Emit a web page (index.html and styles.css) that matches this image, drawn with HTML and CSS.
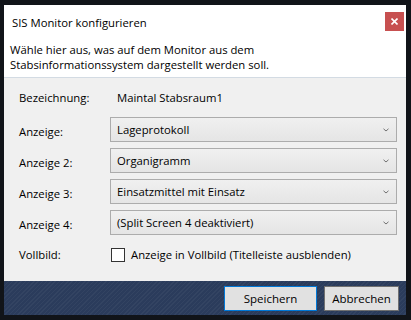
FILE: index.html
```html
<!DOCTYPE html>
<html lang="de">
<head>
<meta charset="utf-8">
<title>SIS Monitor konfigurieren</title>
<link rel="stylesheet" href="styles.css">
</head>
<body>
<div class="window">
  <div class="head">
    <div class="titlebar">
      <span class="title">SIS Monitor konfigurieren</span>
      <button class="close" aria-label="Schließen">
        <svg width="7" height="7" viewBox="0 0 7 7"><path d="M0.5 0.5 L6.5 6.5 M6.5 0.5 L0.5 6.5" stroke="#fff" stroke-width="1.6"/></svg>
      </button>
    </div>
    <p class="desc">Wähle hier aus, was auf dem Monitor aus dem<br>Stabsinformationssystem dargestellt werden soll.</p>
  </div>
  <div class="content">
    <div class="row row-name">
      <span class="label">Bezeichnung:</span>
      <span class="value">Maintal Stabsraum1</span>
    </div>
    <div class="row">
      <span class="label">Anzeige:</span>
      <div class="combo"><span>Lageprotokoll</span><svg class="chev" width="6" height="4" viewBox="0 0 6 4"><path d="M0.5 0.8 L3 3 L5.5 0.8" fill="none" stroke="#707070" stroke-width="1"/></svg></div>
    </div>
    <div class="row">
      <span class="label">Anzeige 2:</span>
      <div class="combo"><span>Organigramm</span><svg class="chev" width="6" height="4" viewBox="0 0 6 4"><path d="M0.5 0.8 L3 3 L5.5 0.8" fill="none" stroke="#707070" stroke-width="1"/></svg></div>
    </div>
    <div class="row">
      <span class="label">Anzeige 3:</span>
      <div class="combo"><span>Einsatzmittel mit Einsatz</span><svg class="chev" width="6" height="4" viewBox="0 0 6 4"><path d="M0.5 0.8 L3 3 L5.5 0.8" fill="none" stroke="#707070" stroke-width="1"/></svg></div>
    </div>
    <div class="row">
      <span class="label">Anzeige 4:</span>
      <div class="combo"><span>(Split Screen 4 deaktiviert)</span><svg class="chev" width="6" height="4" viewBox="0 0 6 4"><path d="M0.5 0.8 L3 3 L5.5 0.8" fill="none" stroke="#707070" stroke-width="1"/></svg></div>
    </div>
    <div class="row row-check">
      <span class="label">Vollbild:</span>
      <label class="check"><span class="box"></span><span>Anzeige in Vollbild (Titelleiste ausblenden)</span></label>
    </div>
  </div>
  <div class="footer">
    <button class="btn primary">Speichern</button>
    <button class="btn">Abbrechen</button>
  </div>
</div>
</body>
</html>
```
FILE: styles.css
```css
html, body {
  margin: 0;
  padding: 0;
  background: #111419;
}
body {
  padding: 5px 5px 5px 4px;
  font-family: "Open Sans", "Noto Sans", sans-serif;
  font-size: 11.3px;
  color: #000;
}
.window {
  width: 402px;
  height: 310px;
  display: flex;
  flex-direction: column;
  background: #f0f0f0;
}
.head {
  background: #fff;
  height: 72px;
  border-bottom: 1px solid #d3dbe3;
  box-sizing: content-box;
}
.titlebar {
  display: flex;
  align-items: flex-start;
  justify-content: space-between;
  padding: 7px 2px 0 8px;
  height: 25px;
}
.title {
  font-size: 11.3px;
  line-height: 16px;
  padding-top: 3px;
}
.close {
  width: 19px;
  height: 19px;
  border: 0;
  padding: 0;
  background: #c75050;
  display: flex;
  align-items: center;
  justify-content: center;
}
.desc {
  margin: 5px 0 0 6px;
  line-height: 15px;
}
.content {
  flex: 1;
  padding: 9px 9px 0 15px;
  display: flex;
  flex-direction: column;
  gap: 6px;
}
.row {
  display: flex;
  align-items: center;
  height: 25px;
}
.label {
  width: 91px;
  flex: none;
  padding-top: 4px;
}
.row-name .label { padding-top: 0; }
.row-name { height: 20px; margin-bottom: 4px; }
.value { padding-left: 7px; }
.combo {
  flex: 1;
  height: 25px;
  box-sizing: border-box;
  border: 1px solid #acacac;
  background: linear-gradient(#f0f0f0, #e5e5e5);
  display: flex;
  align-items: center;
  justify-content: space-between;
  padding: 0 7px 0 6px;
}
.chev { margin-top: 1px; }
.row-check { margin-top: 1px; }
.row-check .label { padding-top: 0; }
.check {
  display: flex;
  align-items: center;
  gap: 6px;
  padding-left: 1px;
}
.box {
  width: 14px;
  height: 14px;
  box-sizing: border-box;
  border: 1px solid #333;
  background: #fff;
}
.footer {
  height: 34px;
  background-color: #2b3c5c;
  background-image: repeating-linear-gradient(135deg, rgba(255,255,255,0.04) 0 1px, transparent 1px 3px);
  display: flex;
  justify-content: flex-end;
  align-items: flex-start;
  gap: 7px;
  padding: 5px 7px 0 0;
  box-sizing: border-box;
}
.btn {
  height: 25px;
  width: 75px;
  font: inherit;
  font-size: 11.5px;
  background: #e1e1e1;
  border: 1px solid #707070;
  padding: 0;
  color: #000;
}
.btn.primary {
  width: 93px;
  border: 1px solid #0078d7;
}
```
